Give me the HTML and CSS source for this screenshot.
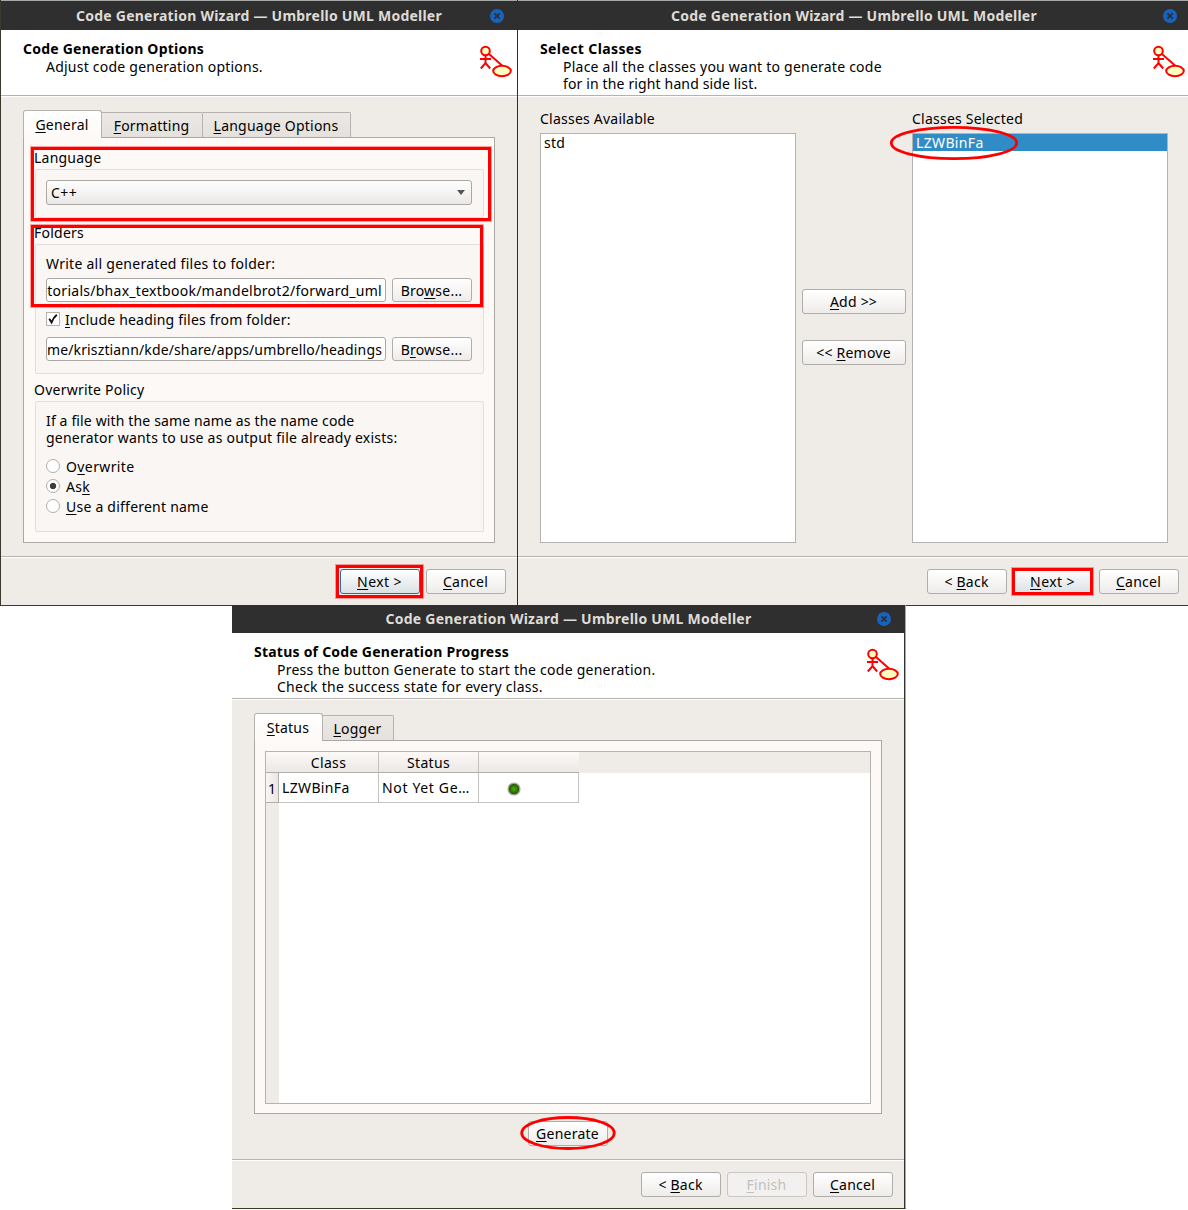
FILE: index.html
```html
<!DOCTYPE html>
<html lang="en">
<head>
<meta charset="utf-8">
<title>Code Generation Wizard — Umbrello UML Modeller</title>
<link rel="stylesheet" href="styles.css">
</head>
<body>
<svg class="defs" width="0" height="0">
  <symbol id="umbrello" viewBox="0 0 34 34">
    <g fill="none" stroke="#f00" stroke-width="2">
      <path d="M10 9 L23 20.5"/>
      <path d="M6.5 9.5 V18 M1 14 H12 M1.8 23.5 L6.5 18 L11.2 23.5"/>
      <circle cx="6.5" cy="6" r="4.3" fill="#ffffc0"/>
      <ellipse cx="23" cy="26" rx="8.8" ry="5.2" fill="#ffffc0"/>
    </g>
  </symbol>
  <symbol id="close" viewBox="0 0 14 14">
    <circle cx="7" cy="7" r="7" fill="#1763be"/>
    <path d="M4.4 4.4 L9.6 9.6 M9.6 4.4 L4.4 9.6" stroke="#2f2f2f" stroke-width="1.7"/>
  </symbol>
</svg>

<div class="row">
  <section class="window options">
    <div class="titlebar"><span>Code Generation Wizard — Umbrello UML Modeller</span><svg class="close"><use href="#close"/></svg></div>
    <header class="head">
      <div><h1>Code Generation Options</h1><p>Adjust code generation options.</p></div>
      <svg class="logo"><use href="#umbrello"/></svg>
    </header>
    <main class="body">
      <nav class="tabs">
        <span class="tab active"><u>G</u>eneral</span>
        <span class="tab"><u>F</u>ormatting</span>
        <span class="tab"><u>L</u>anguage Options</span>
      </nav>
      <div class="pane">
        <h2>Language</h2>
        <div class="group language">
          <div class="combo"><span>C++</span><i class="arrow"></i></div>
        </div>
        <h2>Folders</h2>
        <div class="group folders">
          <p class="wide">Write all generated files to folder:</p>
          <div class="field-row"><div class="input wide"><span>torials/bhax_textbook/mandelbrot2/forward_uml</span></div><button class="btn">Bro<u>w</u>se...</button></div>
          <div class="check-row">
            <svg class="check" viewBox="0 0 14 14"><rect x=".5" y=".5" width="13" height="13" fill="#fff" stroke="#b4b1ae"/><path d="M3.2 6.8 L5.6 10.4 Q7.5 5.5 10.8 2.8" fill="none" stroke="#111" stroke-width="1.9"/></svg>
            <span><u>I</u>nclude heading files from folder:</span>
          </div>
          <div class="field-row"><div class="input tight"><span>me/krisztiann/kde/share/apps/umbrello/headings</span></div><button class="btn">B<u>r</u>owse...</button></div>
        </div>
        <h2>Overwrite Policy</h2>
        <div class="group policy">
          <p class="tight">If a file with the same name as the name code<br><span class="norm">generator wants to use as output file already exists:</span></p>
          <div class="radios">
            <div class="radio-row"><i class="radio"></i><span class="loose">O<u>v</u>erwrite</span></div>
            <div class="radio-row"><i class="radio on"></i><span>As<u>k</u></span></div>
            <div class="radio-row"><i class="radio"></i><span><u>U</u>se a different name</span></div>
          </div>
        </div>
      </div>
    </main>
    <footer class="foot"><button class="btn default focus"><u>N</u>ext &gt;</button><button class="btn"><u>C</u>ancel</button></footer>
  </section>

  <section class="window classes">
    <div class="titlebar"><span>Code Generation Wizard — Umbrello UML Modeller</span><svg class="close"><use href="#close"/></svg></div>
    <header class="head">
      <div><h1 class="loose">Select Classes</h1><p>Place all the classes you want to generate code<br><span class="tight">for in the right hand side list.</span></p></div>
      <svg class="logo"><use href="#umbrello"/></svg>
    </header>
    <main class="body">
      <div class="column"><label>Classes Available</label><div class="list"><div class="item">std</div></div></div>
      <div class="movers"><button class="btn"><u>A</u>dd &gt;&gt;</button><button class="btn">&lt;&lt; <u>R</u>emove</button></div>
      <div class="column"><label>Classes Selected</label><div class="list"><div class="item selected">LZWBinFa</div></div></div>
    </main>
    <footer class="foot"><button class="btn">&lt; <u>B</u>ack</button><button class="btn default"><u>N</u>ext &gt;</button><button class="btn"><u>C</u>ancel</button></footer>
  </section>
</div>

<section class="window status">
  <div class="titlebar"><span>Code Generation Wizard — Umbrello UML Modeller</span><svg class="close"><use href="#close"/></svg></div>
  <header class="head">
    <div><h1>Status of Code Generation Progress</h1><p>Press the button Generate to start the code generation.<br>Check the success state for every class.</p></div>
    <svg class="logo"><use href="#umbrello"/></svg>
  </header>
  <main class="body">
    <nav class="tabs"><span class="tab active"><u>S</u>tatus</span><span class="tab"><u>L</u>ogger</span></nav>
    <div class="pane">
      <div class="table">
        <div class="thead"><span class="th first">Class</span><span class="th">Status</span><span class="th last"></span></div>
        <div class="trow">
          <span class="num">1</span><span class="td">LZWBinFa</span><span class="td cut">Not Yet Ge…</span>
          <span class="td led"><svg width="14" height="14" viewBox="0 0 14 14"><defs><radialGradient id="g"><stop offset="0" stop-color="#4fae0c"/><stop offset="1" stop-color="#1d5a00"/></radialGradient></defs><circle cx="7" cy="7" r="6.6" fill="#aaa6a4"/><circle cx="7" cy="7" r="5.2" fill="url(#g)"/></svg></span>
        </div>
        <div class="rest"></div>
      </div>
    </div>
    <button class="btn generate"><u>G</u>enerate</button>
  </main>
  <footer class="foot"><button class="btn">&lt; <u>B</u>ack</button><button class="btn" disabled><u>F</u>inish</button><button class="btn"><u>C</u>ancel</button></footer>
</section>

<div class="mark box m-language"></div>
<div class="mark box m-folders"></div>
<div class="mark box m-next1"></div>
<div class="mark box m-next2"></div>
<svg class="mark m-class" viewBox="0 0 130 36"><ellipse cx="65" cy="18" rx="62.7" ry="15.7"/></svg>
<svg class="mark m-generate" viewBox="0 0 98 36"><ellipse cx="49" cy="18" rx="46.3" ry="15.5"/></svg>
</body>
</html>
```
FILE: styles.css
```css
* { box-sizing: border-box; margin: 0; padding: 0; }
body {
  width: 1188px; height: 1210px; overflow: hidden; position: relative; background: #fff;
  font: 14px/17px "Noto Sans", "Open Sans", sans-serif; letter-spacing: .23px; color: #000; white-space: nowrap;
}
u { text-decoration: underline; text-decoration-thickness: 1px; text-underline-offset: 2px; text-decoration-skip-ink: none; }
.defs { position: absolute; }
.row { display: flex; height: 606px; }

.window { display: flex; flex-direction: column; background: #efebe7; border-bottom: 1px solid #3b3c22; }
.options { width: 517px; height: 606px; border-left: 1px solid #3a3a2c; }
.classes { width: 671px; height: 606px; border-left: 1px solid #2f2f22; }
.status { width: 674px; height: 604px; margin: -1px 0 0 232px; border-right: 1px solid #a9a9a9; box-shadow: inset -1px 0 #333; position: relative; }

.titlebar {
  height: 30px; flex: none; background: #2f2f2f; color: #dfdbd6; border-top: 1px solid #a6a9a7;
  display: flex; align-items: center; justify-content: center; position: relative; font-weight: bold;
}
.classes .titlebar { padding-left: 2px; }
.status .titlebar { height: 28px; border-top: 0; padding-bottom: 2px; }
.close { width: 14px; height: 14px; position: absolute; right: 13px; top: 8px; }
.classes .close { right: 11px; }
.status .close { right: 14px; top: 7px; }

.head {
  height: 67px; flex: none; background: #fff; border-bottom: 1px solid #fff; box-shadow: inset 0 -1px #b5b2af;
  padding: 10px 4px 0 22px; display: flex; justify-content: space-between;
}
.head h1 { font-size: 14px; font-weight: bold; line-height: 17px; margin-bottom: 1px; }
.head h1.loose, .loose { letter-spacing: .39px; }
.head p { padding-left: 23px; }
.classes .head { padding-right: 2px; }
.status .head { margin-right: 1px; padding-right: 4px; }
.status .head p { letter-spacing: .25px; }
.logo { width: 34px; height: 34px; margin-top: 5px; }

.body { flex: 1; padding: 13px 22px 0; }
.foot {
  height: 49px; flex: none; border-top: 1px solid #b5b2af; box-shadow: inset 0 1px #fff;
  display: flex; justify-content: flex-end; align-items: flex-start; gap: 6px; padding: 12px 11px 0 0;
}
.classes .foot { padding-right: 9px; }
.status .foot { margin-right: 1px; }

.btn {
  width: 80px; height: 25px; border: 1px solid #b0adaa; border-radius: 3px; text-align: center;
  background: linear-gradient(#fff, #f8f7f6 45%, #eeecea); font: inherit; letter-spacing: inherit; color: #000; line-height: 22px; padding: 1px 1px 0 0;
}
.btn.default { background: linear-gradient(#fff, #eef1f3 45%, #dbe1e5); letter-spacing: .4px; }
.btn.focus { border-color: #2f6f9e; }
.btn:disabled { color: #c2bfbc; border-color: #c9c6c3; background: #f3f1ef; }

.tabs { display: flex; align-items: flex-end; height: 28px; position: relative; margin-bottom: -1px; }
.tab { height: 26px; border: 1px solid #b5b2af; border-left: 0; border-bottom-color: #aaa7a4; background: linear-gradient(#ebe8e5, #e5e1dd); line-height: 17px; padding: 4px 1px 0 0; text-align: center; border-radius: 0 2px 0 0; }
.tab.active { height: 28px; border-left: 1px solid #b5b2af; border-bottom: 0; background: linear-gradient(#fff, #fdf9f6); padding-top: 5px; border-radius: 3px 3px 0 0; }
.options .tab { width: 101px; }
.options .tab.active { width: 79px; }
.options .tab:last-child { width: 148px; }
.status .tab { width: 71px; }
.status .tab.active { width: 69px; }
.pane { background: #fdf9f6; border: 1px solid #aaa7a4; }

.options .pane { width: 472px; height: 406px; padding: 11px 10px 0; }
h2 { font: inherit; line-height: 17px; }
.group { margin-left: 1px; width: 449px; background: #faf6f3; border: 1px solid #e2deda; border-radius: 2px; padding: 10px 11px 0 10px; }
.language { height: 49px; margin-top: 3px; margin-bottom: 6px; }
.folders { height: 130px; margin-top: 3px; margin-bottom: 7px; }
.policy { height: 131px; margin-top: 3px; }
.combo { height: 25px; border: 1px solid #aaa7a4; border-radius: 3px; background: linear-gradient(#fdfdfd, #f6f5f4 45%, #eae8e6); display: flex; align-items: center; justify-content: space-between; padding: 0 6px 1px 4px; }
.combo span { letter-spacing: .4px; }
.arrow { border: 4.5px solid transparent; border-top: 5px solid #555; border-bottom: 0; margin-top: 1px; }
.wide { letter-spacing: .27px; }
.field-row { display: flex; gap: 6px; }
.folders p { margin-bottom: 6px; }
.input { width: 340px; height: 24px; background: #fff; border: 1px solid #aaa7a4; border-radius: 3px; overflow: hidden; display: flex; justify-content: flex-end; align-items: center; padding: 1px 3px 0 0; }
.field-row .btn { height: 24px; }
.check-row { display: flex; gap: 5px; height: 35px; padding-top: 9px; letter-spacing: .2px; }
.check { width: 14px; height: 14px; margin-top: 1px; }
.tight { letter-spacing: .14px; }
.norm { letter-spacing: .23px; }
.radios { padding-top: 10px; }
.radio-row { height: 20px; display: flex; align-items: center; gap: 6px; line-height: 20px; }
.radio-row span { padding-top: 1px; }
.radio { width: 14px; height: 14px; border: 1px solid #b0adaa; border-radius: 50%; background: #fff; }
.radio.on { background: radial-gradient(circle, #3c3c3c 2.8px, #fff 3.6px); }

.classes .body { display: flex; gap: 6px; padding-right: 20px; }
.column { width: 256px; }
.column label { display: block; line-height: 17px; margin-bottom: 6px; }
.list { height: 410px; background: #fff; border: 1px solid #b5b2af; }
.item { height: 17px; padding-left: 3px; line-height: 18px; }
.item.selected { background: #308cc6; color: #fff; letter-spacing: .35px; }
.movers { width: 104px; padding-top: 179px; display: flex; flex-direction: column; gap: 26px; }
.movers .btn { width: 104px; }

.status .body { padding: 13px 22px 0; }
.status .pane { width: 628px; height: 374px; padding: 10px; }
.table { height: 353px; border: 1px solid #b5b2af; background: #fff; display: flex; flex-direction: column; }
.thead { display: flex; height: 21px; flex: none; background: #efebe7; }
.th { width: 100px; border-right: 1px solid #c5c2bf; border-bottom: 1px solid #b0adaa; background: linear-gradient(#fcf9f7, #ebe8e5); text-align: center; line-height: 21px; letter-spacing: .35px; }
.th.first { width: 113px; padding-left: 13px; }
.th.last { border-right: 0; }
.trow { display: flex; height: 30px; flex: none; }
.num { width: 13px; background: linear-gradient(90deg, #f8f5f2, #e9e6e3); border-right: 1px solid #b0adaa; border-bottom: 1px solid #b0adaa; text-align: center; line-height: 32px; }
.td { width: 100px; border-right: 1px solid #c5c2bf; border-bottom: 1px solid #c5c2bf; padding-left: 3px; line-height: 30px; letter-spacing: .35px; }
.td.cut { letter-spacing: .65px; }
.td.led { padding: 9px 0 0 28px; line-height: 0; }
.rest { flex: 1; border-left: 13px solid #efebe7; }
.generate { display: block; margin: 7px 0 0 274px; }

.mark { position: absolute; }
.box { border: 3px solid #f00; box-shadow: 0 0 0 1px rgba(255, 0, 0, .35); }
.m-language { left: 31px; top: 147px; width: 460px; height: 74px; }
.m-folders { left: 31px; top: 225px; width: 452px; height: 82px; }
.m-next1 { left: 336px; top: 565px; width: 87px; height: 33px; }
.m-next2 { left: 1012px; top: 568px; width: 81px; height: 27px; }
svg.mark { fill: none; stroke: #f00; stroke-width: 2.8; }
.m-class { left: 889px; top: 125px; width: 130px; height: 36px; }
.m-generate { left: 519px; top: 1115px; width: 98px; height: 36px; }
```
